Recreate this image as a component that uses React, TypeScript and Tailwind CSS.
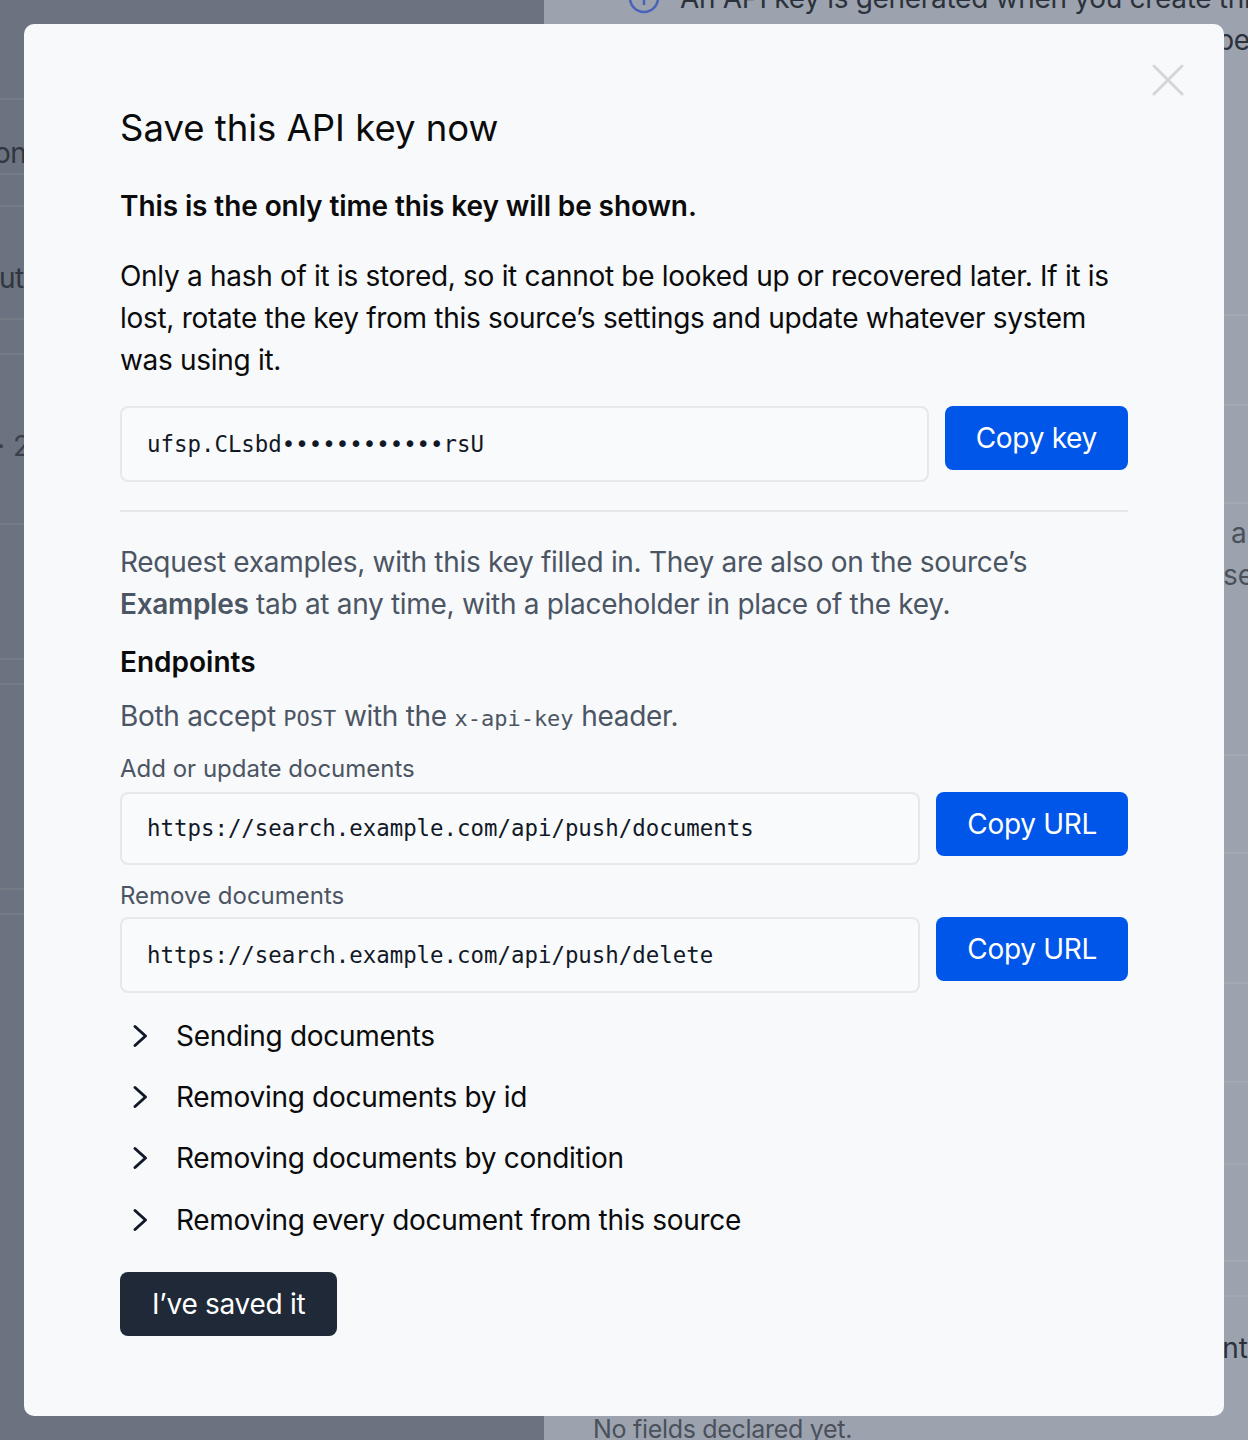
import React from "react";

const sans = "font-['Inter','Noto_Sans',sans-serif]";
const mono = "font-['DejaVu_Sans_Mono','Liberation_Mono',monospace]";

function Chevron() {
  return (
    <svg
      width="16"
      height="24"
      viewBox="0 0 16 24"
      fill="none"
      stroke="#111827"
      strokeWidth="3"
      strokeLinecap="round"
      strokeLinejoin="round"
      className="shrink-0"
    >
      <path d="M3 2.5 L13.5 12 L3 21.5" />
    </svg>
  );
}

function CloseIcon() {
  return (
    <svg width="32" height="32" viewBox="0 0 32 32" fill="none" stroke="#d4d6da" strokeWidth="3" strokeLinecap="round">
      <path d="M2 2 L30 30 M30 2 L2 30" />
    </svg>
  );
}

function CopyField({ value, label, boxH }: { value: string; label: string; boxH: string }) {
  return (
    <div className="flex items-start gap-4">
      <div
        className={`flex flex-1 items-center rounded-[8px] border-2 border-[#e6e8eb] bg-[#f9fafb] px-[25px] ${boxH}`}
      >
        <span className={`${mono} text-[22.4px] leading-none text-[#111827] whitespace-pre`}>{value}</span>
      </div>
      <button className="h-16 shrink-0 rounded-[8px] bg-[#0056e8] px-[31px] text-[28px] tracking-[-0.3px] text-white">
        {label}
      </button>
    </div>
  );
}

const sections = [
  "Sending documents",
  "Removing documents by id",
  "Removing documents by condition",
  "Removing every document from this source",
];

function PageBehind() {
  return (
    <div className="flex h-full w-full">
      {/* sidebar column */}
      <aside className="w-[544px] shrink-0 overflow-hidden bg-[#6b7280] text-[28px] leading-[42px] text-[#30363f]">
        <div className="h-[100px] border-b-2 border-[#767c86]" />
        <div className="h-[75px] border-b-2 border-[#767c86] pt-[32px]">
          <span className="-ml-[6px] whitespace-nowrap tracking-[-0.5px]">onfiguration</span>
        </div>
        <div className="h-[32px] border-b-2 border-[#767c86]" />
        <div className="h-[113px] border-b-2 border-[#767c86] pt-[50px]">
          <span className="-ml-[1px] whitespace-nowrap tracking-[-0.5px]">utes</span>
        </div>
        <div className="h-[35px] border-b-2 border-[#767c86]" />
        <div className="h-[170px] border-b-2 border-[#767c86] pt-[70px]">
          <span className="-ml-[3px] whitespace-nowrap text-[#3a404a]">· 2 fields</span>
        </div>
        <div className="h-[135px] border-b-2 border-[#767c86]" />
        <div className="h-[25px] border-b-2 border-[#767c86]" />
        <div className="h-[205px] border-b-2 border-[#767c86]" />
        <div className="h-[25px] border-b-2 border-[#767c86]" />
      </aside>

      {/* main column */}
      <main className="flex-1 overflow-hidden bg-[#9ca3af] text-[28px] leading-[42px] text-[#2c323b]">
        <div className="-mt-[23px] flex gap-[20px] pl-[84px]">
          <svg width="32" height="32" viewBox="0 0 32 32" fill="none" stroke="#4a63b8" strokeWidth="2.5" className="mt-[5px] shrink-0">
            <circle cx="16" cy="16" r="14" />
            <path d="M16 14 V23" />
            <circle cx="16" cy="9.5" r="0.8" fill="#4a63b8" />
          </svg>
          <div className="w-[640px]">
            <div className="whitespace-nowrap tracking-[-0.3px]">An API key is generated when you create this source</div>
            <div className="whitespace-nowrap pl-[537px] tracking-[-0.3px]">pe it somewhere safe.</div>
          </div>
        </div>
        <div className="h-[255px] border-b-2 border-[#a3a9b2]" />
        <div className="h-[90px] border-b-2 border-[#a3a9b2]" />
        <div className="h-[98px] border-b-2 border-[#a3a9b2]" />
        <div className="h-[252px] border-b-2 border-[#a3a9b2] pt-[8px] text-[#4a515b]">
          <div className="whitespace-nowrap pl-[687px]">a</div>
          <div className="whitespace-nowrap pl-[679px]">se</div>
        </div>
        <div className="h-[98px] border-b-2 border-[#a3a9b2]" />
        <div className="h-[130px] border-b-2 border-[#a3a9b2]" />
        <div className="h-[99px] border-b-2 border-[#a3a9b2]" />
        <div className="h-[82px] border-b-2 border-[#a3a9b2]" />
        <div className="h-[97px] border-b-2 border-[#a3a9b2]" />
        <div className="h-[35px] border-b-2 border-[#a3a9b2]" />
        <div className="h-[96px] pt-[30px]">
          <div className="whitespace-nowrap pl-[662px] text-[#2c323b]">ents</div>
        </div>
        <div className="whitespace-nowrap pl-[49px] pt-[15px] text-[25px] tracking-[-0.3px] text-[#4a515b]">
          No fields declared yet.
        </div>
      </main>
    </div>
  );
}

export default function App() {
  return (
    <div className={`${sans} relative h-[1440px] w-[1248px] overflow-hidden`}>
      <PageBehind />

      {/* dialog */}
      <div className="absolute left-6 top-6 h-[1392px] w-[1200px] rounded-[10px] bg-[#f8f9fb] px-24 pt-[82px]">
        <button className="absolute right-10 top-10 p-0" aria-label="Close">
          <CloseIcon />
        </button>

        <h2 className="text-[36.5px] font-normal leading-[44px] text-[#0b0b0c]">Save this API key now</h2>

        <p className="mt-[35px] text-[28px] font-semibold leading-[42px] tracking-[-0.1px] text-[#0b0b0c]">
          This is the only time this key will be shown.
        </p>

        <p className="mt-[28px] text-[28px] leading-[42px] tracking-[-0.3px] text-[#0b0b0c]">
          Only a hash of it is stored, so it cannot be looked up or recovered later. If it is lost, rotate the key
          from this source’s settings and update whatever system was using it.
        </p>

        <div className="mt-[25px]">
          <CopyField value="ufsp.CLsbd••••••••••••rsU" label="Copy key" boxH="h-[76px]" />
        </div>

        <div className="mt-[28px] h-[2px] bg-[#e5e7eb]" />

        <p className="mt-[29px] text-[28px] leading-[42px] tracking-[-0.3px] text-[#4b5563]">
          Request examples, with this key filled in. They are also on the source’s{" "}
          <span className="font-semibold">Examples</span> tab at any time, with a placeholder in place of the key.
        </p>

        <h3 className="mt-[16px] text-[28px] font-semibold leading-[42px] text-[#0b0b0c]">Endpoints</h3>

        <p className="mt-[12px] h-[42px] text-[28px] leading-[42px] tracking-[-0.3px] text-[#4b5563]">
          Both accept <span className={`${mono} text-[22px] leading-none tracking-normal`}>POST</span> with the{" "}
          <span className={`${mono} text-[22px] leading-none tracking-normal`}>x-api-key</span> header.
        </p>

        <div className="mt-[14px] text-[24px] leading-[36px] text-[#4b5563]">Add or update documents</div>
        <div className="mt-[5px]">
          <CopyField value="https://search.example.com/api/push/documents" label="Copy URL" boxH="h-[73px]" />
        </div>

        <div className="mt-[13px] text-[24px] leading-[36px] text-[#4b5563]">Remove documents</div>
        <div className="mt-[3px]">
          <CopyField value="https://search.example.com/api/push/delete" label="Copy URL" boxH="h-[76px]" />
        </div>

        <div className="mt-[12px] flex flex-col">
          {sections.map((s) => (
            <div
              key={s}
              className="flex h-[61.3px] items-center gap-[28px] pl-3 text-[28px] tracking-[-0.3px] text-[#0b0b0c]"
            >
              <Chevron />
              <span>{s}</span>
            </div>
          ))}
        </div>

        <button className="mt-[22px] h-16 rounded-[8px] bg-[#1f2937] px-8 text-[28px] tracking-[-0.3px] text-white">
          I’ve saved it
        </button>
      </div>
    </div>
  );
}
